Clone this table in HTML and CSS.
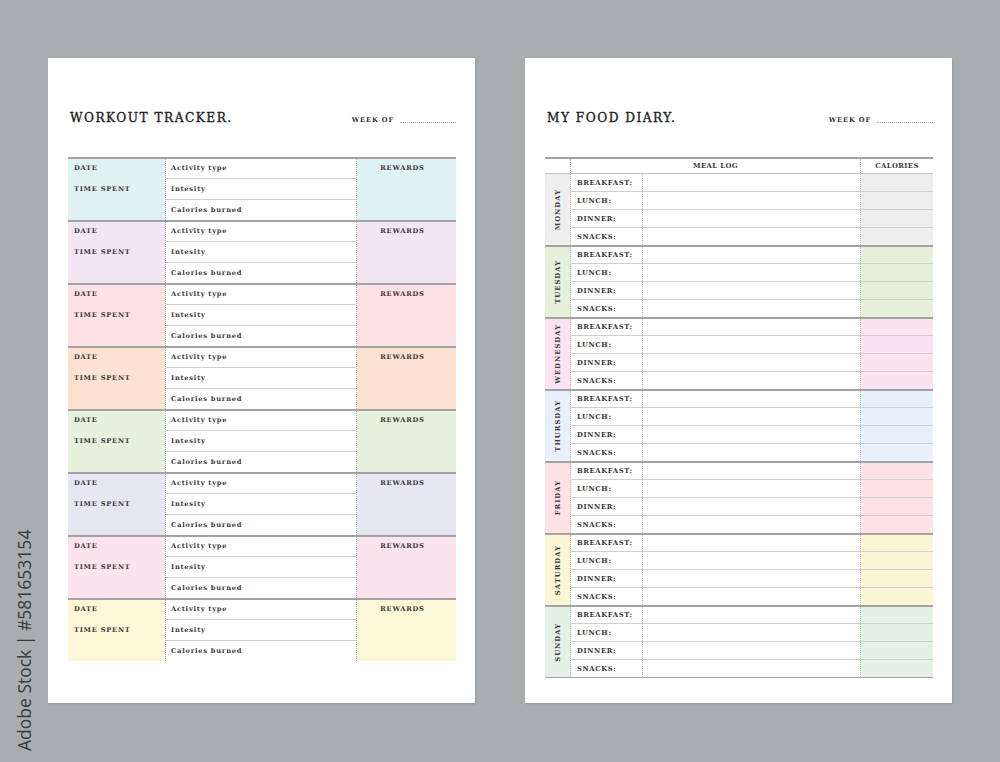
FILE: index.html
```html
<!DOCTYPE html>
<html>
<head>
<meta charset="utf-8">
<link rel="stylesheet" href="styles.css">
</head>
<body>
<div class="stage">
  <div class="credit">Adobe Stock | #581653154</div>

  <section class="page">
    <header class="head">
      <h1 class="title">WORKOUT TRACKER.</h1>
      <div class="week"><span>WEEK OF</span><i class="dots"></i></div>
    </header>
    <div class="wt">
      <div class="block c1"><div class="lcol"><div>DATE</div><div>TIME SPENT</div></div><div class="mcol"><div>Activity type</div><div>Intesity</div><div>Calories burned</div></div><div class="rcol">REWARDS</div></div>
      <div class="block c2"><div class="lcol"><div>DATE</div><div>TIME SPENT</div></div><div class="mcol"><div>Activity type</div><div>Intesity</div><div>Calories burned</div></div><div class="rcol">REWARDS</div></div>
      <div class="block c3"><div class="lcol"><div>DATE</div><div>TIME SPENT</div></div><div class="mcol"><div>Activity type</div><div>Intesity</div><div>Calories burned</div></div><div class="rcol">REWARDS</div></div>
      <div class="block c4"><div class="lcol"><div>DATE</div><div>TIME SPENT</div></div><div class="mcol"><div>Activity type</div><div>Intesity</div><div>Calories burned</div></div><div class="rcol">REWARDS</div></div>
      <div class="block c5"><div class="lcol"><div>DATE</div><div>TIME SPENT</div></div><div class="mcol"><div>Activity type</div><div>Intesity</div><div>Calories burned</div></div><div class="rcol">REWARDS</div></div>
      <div class="block c6"><div class="lcol"><div>DATE</div><div>TIME SPENT</div></div><div class="mcol"><div>Activity type</div><div>Intesity</div><div>Calories burned</div></div><div class="rcol">REWARDS</div></div>
      <div class="block c7"><div class="lcol"><div>DATE</div><div>TIME SPENT</div></div><div class="mcol"><div>Activity type</div><div>Intesity</div><div>Calories burned</div></div><div class="rcol">REWARDS</div></div>
      <div class="block c8"><div class="lcol"><div>DATE</div><div>TIME SPENT</div></div><div class="mcol"><div>Activity type</div><div>Intesity</div><div>Calories burned</div></div><div class="rcol">REWARDS</div></div>
    </div>
  </section>

  <section class="page">
    <header class="head">
      <h1 class="title">MY FOOD DIARY.</h1>
      <div class="week"><span>WEEK OF</span><i class="dots"></i></div>
    </header>
    <div class="fd">
      <div class="fhead"><div class="fh-day"></div><div class="fh-log">MEAL LOG</div><div class="fh-cal">CALORIES</div></div>
      <div class="day d1"><div class="dname"><span>MONDAY</span></div><div class="rows"><div class="row"><div class="lab">BREAKFAST:</div><div class="log"></div><div class="cal"></div></div><div class="row"><div class="lab">LUNCH:</div><div class="log"></div><div class="cal"></div></div><div class="row"><div class="lab">DINNER:</div><div class="log"></div><div class="cal"></div></div><div class="row"><div class="lab">SNACKS:</div><div class="log"></div><div class="cal"></div></div></div></div>
      <div class="day d2"><div class="dname"><span>TUESDAY</span></div><div class="rows"><div class="row"><div class="lab">BREAKFAST:</div><div class="log"></div><div class="cal"></div></div><div class="row"><div class="lab">LUNCH:</div><div class="log"></div><div class="cal"></div></div><div class="row"><div class="lab">DINNER:</div><div class="log"></div><div class="cal"></div></div><div class="row"><div class="lab">SNACKS:</div><div class="log"></div><div class="cal"></div></div></div></div>
      <div class="day d3"><div class="dname"><span>WEDNESDAY</span></div><div class="rows"><div class="row"><div class="lab">BREAKFAST:</div><div class="log"></div><div class="cal"></div></div><div class="row"><div class="lab">LUNCH:</div><div class="log"></div><div class="cal"></div></div><div class="row"><div class="lab">DINNER:</div><div class="log"></div><div class="cal"></div></div><div class="row"><div class="lab">SNACKS:</div><div class="log"></div><div class="cal"></div></div></div></div>
      <div class="day d4"><div class="dname"><span>THURSDAY</span></div><div class="rows"><div class="row"><div class="lab">BREAKFAST:</div><div class="log"></div><div class="cal"></div></div><div class="row"><div class="lab">LUNCH:</div><div class="log"></div><div class="cal"></div></div><div class="row"><div class="lab">DINNER:</div><div class="log"></div><div class="cal"></div></div><div class="row"><div class="lab">SNACKS:</div><div class="log"></div><div class="cal"></div></div></div></div>
      <div class="day d5"><div class="dname"><span>FRIDAY</span></div><div class="rows"><div class="row"><div class="lab">BREAKFAST:</div><div class="log"></div><div class="cal"></div></div><div class="row"><div class="lab">LUNCH:</div><div class="log"></div><div class="cal"></div></div><div class="row"><div class="lab">DINNER:</div><div class="log"></div><div class="cal"></div></div><div class="row"><div class="lab">SNACKS:</div><div class="log"></div><div class="cal"></div></div></div></div>
      <div class="day d6"><div class="dname"><span>SATURDAY</span></div><div class="rows"><div class="row"><div class="lab">BREAKFAST:</div><div class="log"></div><div class="cal"></div></div><div class="row"><div class="lab">LUNCH:</div><div class="log"></div><div class="cal"></div></div><div class="row"><div class="lab">DINNER:</div><div class="log"></div><div class="cal"></div></div><div class="row"><div class="lab">SNACKS:</div><div class="log"></div><div class="cal"></div></div></div></div>
      <div class="day d7"><div class="dname"><span>SUNDAY</span></div><div class="rows"><div class="row"><div class="lab">BREAKFAST:</div><div class="log"></div><div class="cal"></div></div><div class="row"><div class="lab">LUNCH:</div><div class="log"></div><div class="cal"></div></div><div class="row"><div class="lab">DINNER:</div><div class="log"></div><div class="cal"></div></div><div class="row"><div class="lab">SNACKS:</div><div class="log"></div><div class="cal"></div></div></div></div>
    </div>
  </section>
</div>
</body>
</html>
```
FILE: styles.css
```css
* { box-sizing: border-box; }
html, body { margin: 0; padding: 0; }
body {
  background: #a9adb0;
  width: 1000px;
  height: 762px;
  overflow: hidden;
  font-family: "DejaVu Serif", "Liberation Serif", serif;
  color: #333;
}
.stage {
  position: relative;
  display: flex;
  gap: 50px;
  padding: 58px 0 0 48px;
  height: 762px;
}
.credit {
  position: absolute;
  left: 12px;
  top: 751px;
  transform-origin: 0 0;
  transform: rotate(-90deg);
  font-family: "Open Sans", "Liberation Sans", sans-serif;
  font-size: 17.5px;
  color: #3a3a3a;
  white-space: nowrap;
}
.page {
  width: 427px;
  height: 645px;
  background: #fff;
  box-shadow: 1px 1px 2px rgba(0,0,0,0.12);
  padding: 0 19px 0 20px;
}
.head {
  height: 99px;
  display: flex;
  justify-content: space-between;
  align-items: flex-start;
  padding-top: 51px;
}
.title {
  margin: 0 0 0 2px;
  font-family: "DejaVu Serif Condensed", "DejaVu Serif", serif;
  font-stretch: condensed;
  font-weight: normal;
  font-size: 13.5px;
  letter-spacing: 1.5px;
  color: #1e1e1e;
  -webkit-text-stroke: 0.35px #1e1e1e;
  line-height: 16px;
}
.week {
  display: flex;
  align-items: flex-end;
  margin-top: 7px;
  font-size: 6.6px;
  font-weight: bold;
  letter-spacing: 0.9px;
  color: #333;
}
.week span { line-height: 8px; }
.dots {
  display: block;
  width: 56px;
  margin-left: 6px;
  border-bottom: 1px dotted #aaa;
  height: 1px;
  margin-bottom: 1px;
}

/* workout table */
.wt { width: 388px; }
.block {
  display: flex;
  height: 63px;
  border-top: 2px solid #a3a3a3;
  font-size: 6.7px;
  font-weight: bold;
  letter-spacing: 0.75px;
  color: #3a3a3a;
}
.lcol { width: 97px; padding-left: 6px; }
.lcol div { height: 20px; line-height: 19px; }
.lcol div + div { height: 21px; line-height: 21px; }
.mcol {
  width: 192px;
  border-left: 1px dotted #b0b0b0;
  border-right: 1px dotted #b0b0b0;
  background: #fff;
}
.mcol div { height: 19px; line-height: 19px; padding-left: 5px; }
.mcol div + div { height: 21px; line-height: 20px; border-top: 1px solid #cfcfcf; }
.rcol {
  width: 99px;
  text-align: center;
  padding: 0 8px 0 0;
  line-height: 19px;
}
.c1 .lcol, .c1 .rcol { background: #e0f2f1; }
.c2 .lcol, .c2 .rcol { background: #f3e6f3; }
.c3 .lcol, .c3 .rcol { background: #fde1e7; }
.c4 .lcol, .c4 .rcol { background: #fee2d1; }
.c5 .lcol, .c5 .rcol { background: #e6f1de; }
.c6 .lcol, .c6 .rcol { background: #e7e7f4; }
.c7 .lcol, .c7 .rcol { background: #fce4ef; }
.c8 .lcol, .c8 .rcol { background: #fbf7d7; }

/* food diary */
.fd {
  width: 388px;
  border-bottom: 1px solid #a3a3a3;
  font-size: 6.8px;
  font-weight: bold;
  letter-spacing: 0.6px;
  color: #3a3a3a;
}
.fhead {
  display: flex;
  height: 16px;
  border-top: 2px solid #a3a3a3;
  line-height: 14px;
  letter-spacing: 0.4px;
}
.fh-day { width: 26px; border-right: 1px dotted #b0b0b0; }
.fh-log { width: 290px; text-align: center; border-right: 1px dotted #b0b0b0; }
.fh-cal { width: 72px; text-align: center; }
.day {
  display: flex;
  height: 72px;
  border-top: 2px solid #a3a3a3;
}
.d1 { border-top: 1px solid #c4c4c4; }
.d1 .row:first-child { height: 17px; }
.dname {
  width: 26px;
  display: flex;
  align-items: center;
  justify-content: center;
  border-right: 1px dotted #b8b8b8;
}
.dname span {
  writing-mode: vertical-rl;
  transform: rotate(180deg);
  font-size: 6.8px;
  letter-spacing: 1px;
}
.rows { width: 362px; }
.row { display: flex; height: 18px; border-top: 1px solid #cfcfcf; }
.row:first-child { border-top: none; height: 16px; }
.lab {
  width: 72px;
  padding-left: 6px;
  display: flex;
  align-items: center;
  border-right: 1px dotted #b8b8b8;
}
.log { width: 218px; border-right: 1px dotted #b8b8b8; }
.cal { width: 72px; }
.d1 .dname, .d1 .cal { background: #eeeeee; }
.d2 .dname, .d2 .cal { background: #e4f0da; }
.d3 .dname, .d3 .cal { background: #fbe4ef; }
.d4 .dname, .d4 .cal { background: #e8f1fb; }
.d5 .dname, .d5 .cal { background: #fde1e6; }
.d6 .dname, .d6 .cal { background: #fbf7d6; }
.d7 .dname, .d7 .cal { background: #e3f1e6; }
```
